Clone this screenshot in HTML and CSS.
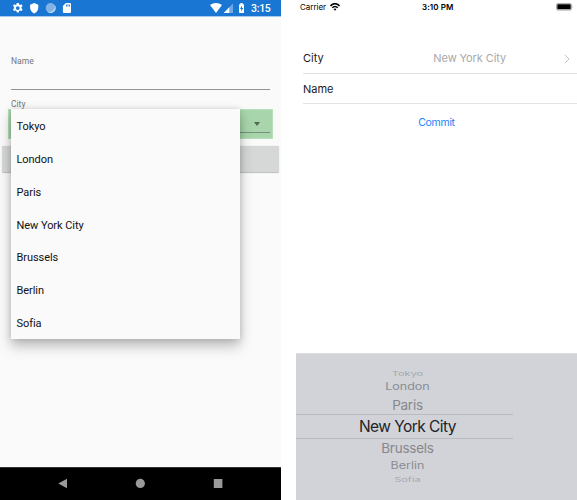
FILE: index.html
```html
<!DOCTYPE html>
<html lang="en">
<head>
<meta charset="utf-8">
<title>City picker</title>
<link rel="stylesheet" href="styles.css">
</head>
<body>
<main class="screens">
  <section class="android">
    <header class="android-status">
      <svg class="status-left" width="62" height="16" viewBox="0 0 62 16">
        <g fill="#fff">
          <path fill-rule="evenodd" d="M4.800 3h2l.4 1.500.9.400 1.500-.6 1 1.700-1.100 1.100v1.200l1.100 1.100-1 1.700-1.500-.6-.9.500-.4 1.500h-2l-.4-1.500-.9-.5-1.500.6-1-1.700 1.100-1.100V7.100L1 6l1-1.700 1.500.6.9-.4zM5.800 6.200a1.900 1.900 0 1 0 0 3.800 1.900 1.900 0 0 0 0-3.800z"/>
          <path d="M22.200 3.100l4.100 1.600v3.100c0 2.400-1.600 4.600-4.100 5.600-2.500-1-4.100-3.200-4.100-5.600V4.700z"/>
          <circle cx="38.600" cy="8" r="4.900" fill="#7fb2e6"/>
          <path d="M42.300 4.600A4.900 4.900 0 0 1 35.200 11.500c3 1.200 6.800-.2 7.600-3.600.2-1.100.1-2.300-.5-3.300z" fill="#c8def4"/>
          <path fill-rule="evenodd" d="M53.800 3H58q1 0 1 1v8q0 1-1 1h-6.100q-1 0-1-1V6zM54 4.600v1.800h.9V4.600zm1.500 0v1.800h.9V4.600zm1.500 0v1.800h.9V4.600z"/>
        </g>
      </svg>
      <div class="status-right">
        <svg width="36" height="16" viewBox="0 0 36 16">
          <path d="M0 5.100C3.400 2.400 8.600 2.400 12 5.100L6 13z" fill="#fff"/>
          <path d="M23 3.500V13H13.700z" fill="#6fa9e2"/>
          <path d="M19.300 7.300V13h-5.600z" fill="#fff"/>
          <path d="M29.100 4.200h1.300V3h2.300v1.200H34V13h-4.900z" fill="#fff"/>
          <path d="M32 5.400l-2 3.600h1.300v2.600l2-3.600H32z" fill="#1976d2"/>
        </svg>
        <span>3:15</span>
      </div>
    </header>
    <form class="android-form">
      <label class="name-label">Name</label>
      <div class="name-input"></div>
      <label class="city-label">City</label>
      <div class="spinner"><div class="spinner-line"><i class="caret"></i></div></div>
      <div class="button"></div>
      <ul class="dropdown">
        <li>Tokyo</li><li>London</li><li>Paris</li><li>New York City</li><li>Brussels</li><li>Berlin</li><li>Sofia</li>
      </ul>
    </form>
    <nav class="android-nav">
      <svg width="281" height="33" viewBox="0 0 281 33" fill="#9a9a9a">
        <path d="M58.300 15.500L67 10.700v9.600z"/>
        <circle cx="140.300" cy="15.400" r="4.600"/>
        <rect x="213.800" y="11" width="8.600" height="9"/>
      </svg>
    </nav>
  </section>
  <section class="ios">
    <header class="ios-status">
      <span class="carrier">Carrier</span>
      <svg class="wifi" width="10" height="8" viewBox="0 0 10 8">
        <g fill="none" stroke="#000" stroke-width="1.500">
          <path d="M.5 2.900C3-.1 7-.1 9.500 2.900"/><path d="M2.300 4.800c1.500-1.800 3.900-1.800 5.400 0"/>
        </g>
        <path d="M3.500 6.100q1.500-1.100 3 0L5 7.700z"/>
      </svg>
      <span class="clock">3:10 PM</span>
      <svg class="battery" width="18" height="8" viewBox="0 0 18 8">
        <rect x=".5" y=".5" width="15" height="6.600" rx="1.500" fill="#fff" stroke="#999" stroke-width=".8"/>
        <rect x="1.300" y="1.300" width="13.400" height="5" rx=".6"/>
        <path d="M16.600 2.700q1.200 1 0 2.200z" fill="#999"/>
      </svg>
    </header>
    <div class="ios-list">
      <div class="row"><span class="city">City</span><span class="value">New York City</span>
        <svg width="6" height="10" viewBox="0 0 6 10" fill="none" stroke="#c4c4c8" stroke-width="1"><path d="M.7.700L5 5 .7 9.300"/></svg>
      </div>
      <div class="row"><span class="name">Name</span></div>
    </div>
    <div class="commit"><span>Commit</span></div>
    <div class="picker">
      <ul class="wheel">
        <li class="far first"><span>Tokyo</span></li>
        <li class="mid upper"><span>London</span></li>
        <li class="near above"><span>Paris</span></li>
        <li class="selected"><span>New York City</span></li>
        <li class="near below"><span>Brussels</span></li>
        <li class="mid lower"><span>Berlin</span></li>
        <li class="far last"><span>Sofia</span></li>
      </ul>
    </div>
  </section>
</main>
</body>
</html>
```
FILE: styles.css
```css
* { box-sizing: border-box; }
body { margin: 0; background: #fff; overflow: hidden; }
ul { list-style: none; margin: 0; padding: 0; }
svg { display: block; flex: none; }
.screens { display: grid; grid-template-columns: 281px 281px; column-gap: 15px; width: 577px; height: 500px; }

.android { display: flex; flex-direction: column; height: 500px; background: #fafafa; font-family: Roboto, sans-serif; overflow: hidden; }
.android-status { display: flex; justify-content: space-between; height: 17px; padding: 0 11px 0 12px; background: #1976d2; border-bottom: 1px solid #a6caec; color: #fff; }
.status-right { display: flex; gap: 5px; font-size: 10.500px; font-weight: 500; line-height: 18px; }
.status-right span { width: 19px; letter-spacing: -.3px; }
.android-form { position: relative; display: flex; flex-direction: column; flex: 1; color: #757575; font-size: 8.500px; }
.name-label { height: 12px; margin: 38px 11px 0; line-height: 12px; }
.name-input { height: 23px; margin: 0 11px; border-bottom: 1px solid #949494; }
.city-label { height: 12px; margin: 8px 11px 0; line-height: 12px; }
.spinner { height: 30px; margin: -1px 8px 0; padding: 0 2px 6px; background: #a8d5ab; border: 1px solid #b7dfba; }
.spinner-line { display: flex; justify-content: flex-end; align-items: center; height: 23px; padding-right: 10px; border-bottom: 1px solid #73937a; }
.caret { margin-top: 6px; border: 3.500px solid transparent; border-top: 4px solid #506a53; border-bottom: 0; }
.button { height: 26px; margin: 7px 2px 0; border-radius: 1.500px; background: #d6d7d7; box-shadow: 0 .5px 1px rgba(0,0,0,.25); }
.dropdown { position: absolute; left: 11px; top: 92px; width: 229px; height: 230px; display: grid; grid-template-rows: repeat(7, 32.857px); background: #fafafa; box-shadow: 0 7px 12px rgba(0,0,0,.26), 0 0 6px rgba(0,0,0,.14); color: #111; font-size: 11px; letter-spacing: -.06px; }
.dropdown li { padding-left: 5.500px; line-height: 35px; }
.android-nav { height: 33px; background: #000; border-top: 1px solid #333; }

.ios { display: flex; flex-direction: column; height: 500px; font-family: Inter, sans-serif; color: #1a1a1a; }
.ios-status { display: grid; grid-template-columns: 30px 92px 1fr 21px; height: 43px; padding-left: 4px; font-size: 8px; line-height: 14px; color: #000; }
.carrier { letter-spacing: -.03px; }
.wifi { margin-top: 3px; }
.clock { font-weight: 600; letter-spacing: .1px; }
.battery { margin-top: 3px; }
.ios-list { margin-left: 7px; font-size: 11px; }
.row { display: flex; align-items: center; height: 30px; padding-right: 7px; border-bottom: 1px solid #e3e3e5; }
.row:first-child { height: 31px; }
.value { margin-left: auto; margin-right: 58px; color: #a8a8aa; letter-spacing: -.1px; }
.row svg { margin-top: 1px; }
.commit { height: 20px; margin-top: 9px; text-align: center; color: #1683fb; font-size: 10.500px; letter-spacing: -.3px; line-height: 20px; }
.picker { height: 147px; margin-top: auto; padding-top: 15px; background: #d1d3d9; border-top: 1px solid #dbddde; }
.wheel { width: 217px; text-align: center; }
.wheel li { display: flex; align-items: center; justify-content: center; padding-left: 6px; white-space: nowrap; }
.wheel span { display: block; line-height: 20px; }
.selected { height: 25px; border: solid #b9bbc1; border-width: 1px 0; color: #222326; font-size: 15.500px; letter-spacing: -.55px; }
.near { height: 18px; color: #86888d; font-size: 13.500px; letter-spacing: -.25px; }
.above span { transform: translateY(-.5px); }
.mid { height: 18px; color: #8a8c92; font-size: 12.500px; }
.mid span { transform: scaleY(.8); }
.far { height: 9px; color: #a6a8ae; font-size: 11px; }
.far span { transform: scaleY(.55); }
```
